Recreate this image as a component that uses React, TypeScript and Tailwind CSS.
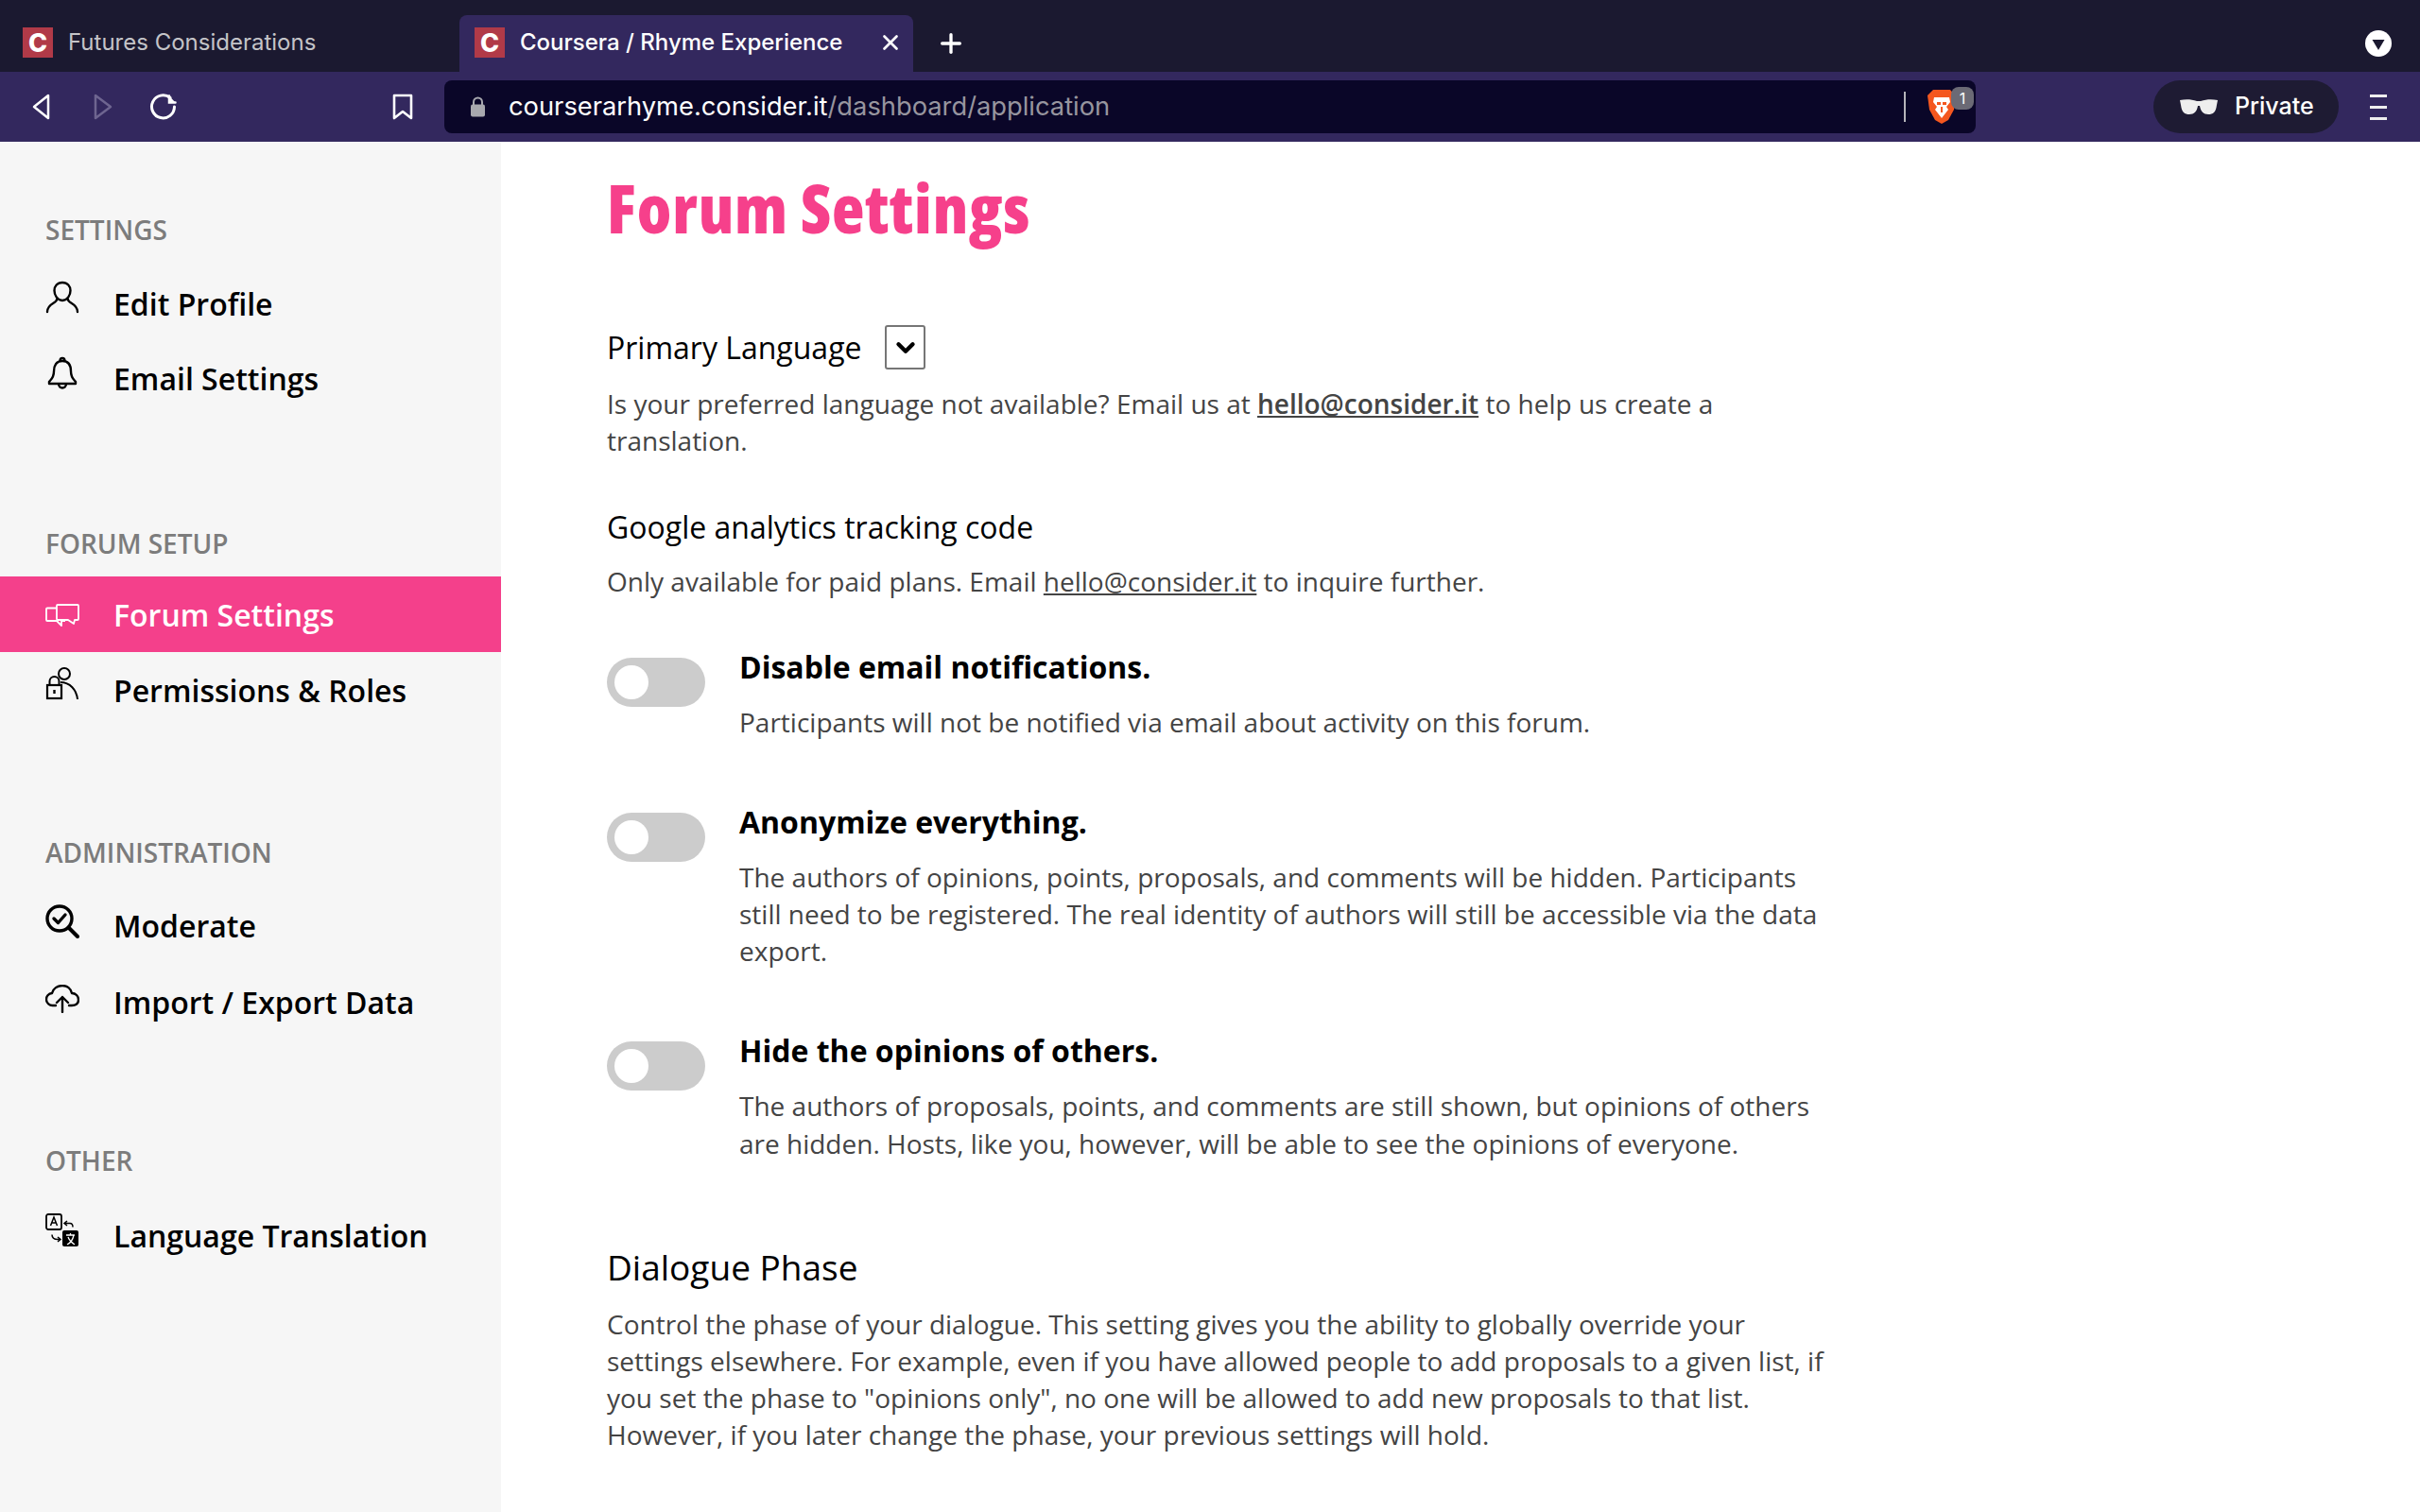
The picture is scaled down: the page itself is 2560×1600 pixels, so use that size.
import { ChevronDown, Plus, X } from "lucide-react";
import type { ReactNode } from "react";

const openSans = "font-['Open_Sans',sans-serif]";

function Favicon() {
  return (
    <div className="flex h-[32px] w-[32px] shrink-0 items-center justify-center bg-[#b13a48] font-['Inter',sans-serif] text-[27px] leading-none font-extrabold text-white">
      C
    </div>
  );
}

function TabStrip() {
  return (
    <div className="flex h-[76px] items-end bg-[#1b1930] font-['Inter',sans-serif]">
      <div className="flex h-[60px] w-[486px] items-center pb-[2px] pl-[24px]">
        <Favicon />
        <span className="ml-[16px] text-[24px] whitespace-nowrap text-[#c4c4c8]">Futures Considerations</span>
      </div>
      <div className="flex h-[60px] w-[480px] items-center rounded-t-[8px] bg-[#33285e] pb-[2px] pl-[16px]">
        <Favicon />
        <span className="ml-[16px] w-[379px] shrink-0 text-[24px] font-medium whitespace-nowrap text-white">Coursera / Rhyme Experience</span>
        <X className="h-[26px] w-[26px] shrink-0 text-white" strokeWidth={2.5} />
      </div>
      <div className="flex h-[60px] flex-1 items-center justify-between pr-[30px] pl-[24px]">
        <Plus className="h-[32px] w-[32px] text-white" strokeWidth={2.5} />
        <svg width="28" height="28" viewBox="0 0 28 28">
          <circle cx="14" cy="14" r="14" fill="#fff" />
          <path d="M7.5 10h13L14 21z" fill="#1b1930" />
        </svg>
      </div>
    </div>
  );
}

function BraveIcon() {
  return (
    <svg width="32" height="38" viewBox="0 0 32 38">
      <path d="M7 1h18l5 6-1 15-6 11-7 4-7-4L3 22 1 7z" fill="#f4571f" />
      <path d="M8 9h16l1 5-4 5 2 3-7 9-7-9 2-3-4-5z" fill="#fff" />
      <path d="M11 14h4v3h-4zM17 14h4v3h-4zM15 19h2v6h-2z" fill="#f4571f" />
    </svg>
  );
}

function Toolbar() {
  return (
    <div className="flex h-[74px] items-center bg-[#33285e] font-['Inter',sans-serif]">
      <div className="flex w-[470px] shrink-0 items-center pl-[32px]">
        <svg width="24" height="28" viewBox="0 0 24 28" fill="none" stroke="#fff" strokeWidth="2.5" strokeLinejoin="round">
          <path d="M19 2v24L4 14z" />
        </svg>
        <svg className="ml-[41px]" width="24" height="28" viewBox="0 0 24 28" fill="none" stroke="#6e6590" strokeWidth="2.5" strokeLinejoin="round">
          <path d="M4 2v24l16-12z" />
        </svg>
        <svg className="ml-[37px]" width="30" height="30" viewBox="0 0 30 30" fill="none" stroke="#fff" strokeWidth="3" strokeLinecap="round">
          <path d="M22 5.5A12 12 0 1 0 26.5 15" />
          <path d="M21 3.5v7h6.500" strokeWidth="2.5" fill="#fff" />
        </svg>
        <svg className="ml-[226px]" width="24" height="28" viewBox="0 0 24 28" fill="none" stroke="#fff" strokeWidth="2.6" strokeLinejoin="round">
          <path d="M3 2h18v24l-9-7-9 7z" />
        </svg>
      </div>
      <div className="flex h-[56px] w-[1620px] shrink-0 items-center rounded-[8px] bg-[#0a0628] pl-[27px]">
        <svg width="17" height="22" viewBox="0 0 17 22" fill="#a8a8ae">
          <path d="M4 9V6a4.500 4.500 0 0 1 9 0v3" fill="none" stroke="#a8a8ae" strokeWidth="2" />
          <rect x="1" y="8.500" width="15" height="13" rx="2" />
        </svg>
        <span className="ml-[24px] text-[27.3px] text-white">
          courserarhyme.consider.it<span className="text-[#97959f]">/dashboard/application</span>
        </span>
        <div className="ml-auto h-[32px] w-[2px] bg-[#b5b4ba]" />
        <div className="relative mr-[20px] ml-[22px]">
          <BraveIcon />
          <div className="absolute -top-[2px] -right-[18px] flex h-[24px] w-[24px] items-center justify-center rounded-[8px] bg-[#6b6a75] text-[16px] text-white">
            1
          </div>
        </div>
      </div>
      <div className="ml-[188px] flex h-[56px] w-[196px] shrink-0 items-center rounded-full bg-[#1e1b33] pl-[28px]">
        <svg width="40" height="18" viewBox="0 0 40 18" fill="#eee">
          <path d="M0 2c6-1 12-1 18 1h4c6-2 12-2 18-1l-1 5c-1 8-4 10-9 10s-8-3-9-9h-2c-1 6-4 9-9 9S2 15 1 7z" />
        </svg>
        <span className="ml-[18px] text-[25px] font-medium text-white">Private</span>
      </div>
      <div className="ml-[33px] flex w-[18px] shrink-0 flex-col gap-[9px]">
        <div className="h-[3px] bg-[#eee]" />
        <div className="h-[3px] bg-[#eee]" />
        <div className="h-[3px] bg-[#eee]" />
      </div>
    </div>
  );
}

const icons = {
  user: (
    <svg width="36" height="36" viewBox="0 0 36 36" fill="none" stroke="currentColor" strokeWidth="2.4" strokeLinecap="round">
      <path d="M18 2c5.500 0 8.500 4 8.500 8.500S23.500 21 18 21 9.500 15 9.500 10.500 12.500 2 18 2z" />
      <path d="M12 20c0 4-10 4-10 13M24 20c0 4 10 4 10 13" />
    </svg>
  ),
  bell: (
    <svg width="36" height="36" viewBox="0 0 36 36" fill="none" stroke="currentColor" strokeWidth="2.4" strokeLinejoin="round">
      <path d="M18 5c-6.500 0-9 5-9 11 0 7-3.500 9-5 11v2h28v-2c-1.500-2-5-4-5-11 0-6-2.500-11-9-11z" />
      <path d="M15.500 5c0-4 5-4 5 0M14 29c0 6 8 6 8 0" />
    </svg>
  ),
  forum: (
    <svg width="36" height="24" viewBox="0 0 36 24" fill="none" stroke="currentColor" strokeWidth="1.800" strokeLinejoin="round">
      <path d="M12 4.500H2a1 1 0 0 0-1 1V17a1 1 0 0 0 1 1h10l5 5v-5h4" />
      <path d="M13 1h21a1 1 0 0 1 1 1v14a1 1 0 0 1-1 1h-3l-1 4-6-4H13a1 1 0 0 1-1-1V2a1 1 0 0 1 1-1z" />
    </svg>
  ),
  roles: (
    <svg width="36" height="36" viewBox="0 0 36 36" fill="none" stroke="currentColor" strokeWidth="2">
      <circle cx="20" cy="7" r="6" />
      <path d="M16 16c10 0 17 8 18 18" />
      <rect x="2" y="19" width="15" height="14" strokeWidth="2.2" />
      <path d="M4.500 19v-4a5 5 0 0 1 10 0v4" />
      <path d="M9.500 24v4" strokeWidth="2.400" />
    </svg>
  ),
  moderate: (
    <svg width="36" height="36" viewBox="0 0 36 36" fill="none" stroke="currentColor" strokeWidth="3.4" strokeLinecap="round" strokeLinejoin="round">
      <circle cx="15" cy="15" r="13" />
      <path d="M9 15l4.500 4.500L21 11" />
      <path d="M25 25l9 9" strokeWidth="4" />
    </svg>
  ),
  cloud: (
    <svg width="36" height="30" viewBox="0 0 36 30" fill="none" stroke="currentColor" strokeWidth="2.4" strokeLinecap="round" strokeLinejoin="round">
      <path d="M11 22H8a6.500 6.500 0 0 1-1-13c1-5 6-8 11-8s9 3 10 8c4 0 7 3 7 7s-3 6-7 6h-3" />
      <path d="M18 29V13M12 19l6-6 6 6" />
    </svg>
  ),
  translate: (
    <svg width="36" height="36" viewBox="0 0 36 36" fill="none">
      <rect x="1" y="1" width="16" height="16" rx="2" stroke="currentColor" strokeWidth="1.800" />
      <path d="M5.500 13l3.500-9 3.500 9M7 10h4" stroke="currentColor" strokeWidth="1.500" />
      <rect x="18" y="18" width="17" height="17" rx="2" fill="currentColor" />
      <path d="M22 23h9M26.500 21v2M23 33c4-2 6-5 7-10M24 25c1 3 4 6 7 8" stroke="#fff" strokeWidth="1.300" />
      <path d="M23 8l-3 2.500 3 2.500M20 10.500h6c2 0 3 1.500 3 4" stroke="currentColor" strokeWidth="1.500" />
      <path d="M13 25l3 2.500-3 2.500M16 27.500h-3c-4 0-6-2-6-5" stroke="currentColor" strokeWidth="1.500" />
    </svg>
  ),
};

function NavItem({
  icon,
  label,
  iconShift,
  active,
  height = "h-[80px]",
}: {
  icon: ReactNode;
  label: string;
  iconShift: string;
  active?: boolean;
  height?: string;
}) {
  return (
    <div className={`flex items-center pl-[48px] ${height} ${active ? "bg-[#f4408b] text-white" : "text-black"}`}>
      <div className={`flex w-[36px] shrink-0 justify-center ${iconShift}`}>{icon}</div>
      <span className="ml-[36px] pt-[1px] text-[32px] leading-none font-semibold">{label}</span>
    </div>
  );
}

function NavHeading({ label, className }: { label: string; className: string }) {
  return <div className={`h-[40px] pl-[48px] text-[28px] leading-[40px] font-semibold text-[#7c7c7c] ${className}`}>{label}</div>;
}

function Sidebar() {
  return (
    <div className={`h-full w-[530px] shrink-0 bg-[#f6f6f6] pt-[73px] ${openSans}`}>
      <NavHeading label="SETTINGS" className="mb-[19px]" />
      <NavItem icon={icons.user} label="Edit Profile" iconShift="-mt-[14px]" height="h-[79px]" />
      <NavItem icon={icons.bell} label="Email Settings" iconShift="-mt-[10px]" height="h-[78px]" />
      <NavHeading label="FORUM SETUP" className="mt-[116px] mb-[15px]" />
      <NavItem icon={icons.forum} label="Forum Settings" active iconShift="mt-[2px]" />
      <NavItem icon={icons.roles} label="Permissions & Roles" iconShift="-mt-[12px]" />
      <NavHeading label="ADMINISTRATION" className="mt-[112px] mb-[16px]" />
      <NavItem icon={icons.moderate} label="Moderate" iconShift="-mt-[8px]" height="h-[82px]" />
      <NavItem icon={icons.cloud} label="Import / Export Data" iconShift="-mt-[6px]" />
      <NavHeading label="OTHER" className="mt-[108px] mb-[19px]" />
      <NavItem icon={icons.translate} label="Language Translation" iconShift="-mt-[10px]" />
    </div>
  );
}

function ToggleRow({ title, className, children }: { title: string; className: string; children: ReactNode }) {
  return (
    <div className={`flex ${className}`}>
      <div className="mt-[10px] flex h-[52px] w-[104px] shrink-0 items-center rounded-full bg-[#cccccc] pl-[8px]">
        <div className="h-[36px] w-[36px] rounded-full bg-white" />
      </div>
      <div className="ml-[36px] min-w-0 flex-1">
        <div className="text-[32px] leading-[40px] font-bold text-black">{title}</div>
        <p className="mt-[19px] text-[28px] leading-[39.2px] text-[#444444]">{children}</p>
      </div>
    </div>
  );
}

function Main() {
  return (
    <div className={`h-full flex-1 pt-[25px] pl-[112px] ${openSans}`}>
      <h1 className="h-[90px] text-[71px] leading-[90px] font-extrabold tracking-[0.8px] text-[#f6408b] [font-stretch:75%]">Forum Settings</h1>
      <div className="w-[1290px]">
        <div className="mt-[79px] flex h-[47px] items-center text-[32px] text-black">
          <span>Primary Language</span>
          <div className="ml-[25px] flex h-[47px] w-[43px] items-center justify-center rounded-[3px] border-2 border-[#767676]">
            <ChevronDown className="h-[30px] w-[30px] text-black" strokeWidth={3.5} />
          </div>
        </div>
        <p className="mt-[17px] text-[28px] leading-[39.2px] text-[#444444]">
          Is your preferred language not available? Email us at{" "}
          <span className="font-semibold underline">hello@consider.it</span> to help us create a translation.
        </p>
        <div className="mt-[52px] text-[32px] leading-[40px] text-black">Google analytics tracking code</div>
        <p className="mt-[18px] text-[28px] leading-[39.2px] text-[#444444]">
          Only available for paid plans. Email <span className="underline">hello@consider.it</span> to inquire further.
        </p>
        <ToggleRow title="Disable email notifications." className="mt-[50px]">
          Participants will not be notified via email about activity on this forum.
        </ToggleRow>
        <ToggleRow title="Anonymize everything." className="mt-[66px]">
          The authors of opinions, points, proposals, and comments will be hidden. Participants still need to be registered. The real
          identity of authors will still be accessible via the data export.
        </ToggleRow>
        <ToggleRow title="Hide the opinions of others." className="mt-[66px]">
          The authors of proposals, points, and comments are still shown, but opinions of others are hidden. Hosts, like you, however,
          will be able to see the opinions of everyone.
        </ToggleRow>
        <div className="mt-[89px] text-[37px] leading-[44px] font-medium text-black">Dialogue Phase</div>
        <p className="mt-[19px] text-[28px] leading-[39.2px] text-[#444444]">
          Control the phase of your dialogue. This setting gives you the ability to globally override your settings elsewhere. For
          example, even if you have allowed people to add proposals to a given list, if you set the phase to "opinions only", no one will
          be allowed to add new proposals to that list. However, if you later change the phase, your previous settings will hold.
        </p>
      </div>
    </div>
  );
}

export default function App() {
  return (
    <div className="flex h-[1600px] w-[2560px] flex-col overflow-hidden bg-white">
      <TabStrip />
      <Toolbar />
      <div className="flex min-h-0 flex-1">
        <Sidebar />
        <Main />
      </div>
    </div>
  );
}
